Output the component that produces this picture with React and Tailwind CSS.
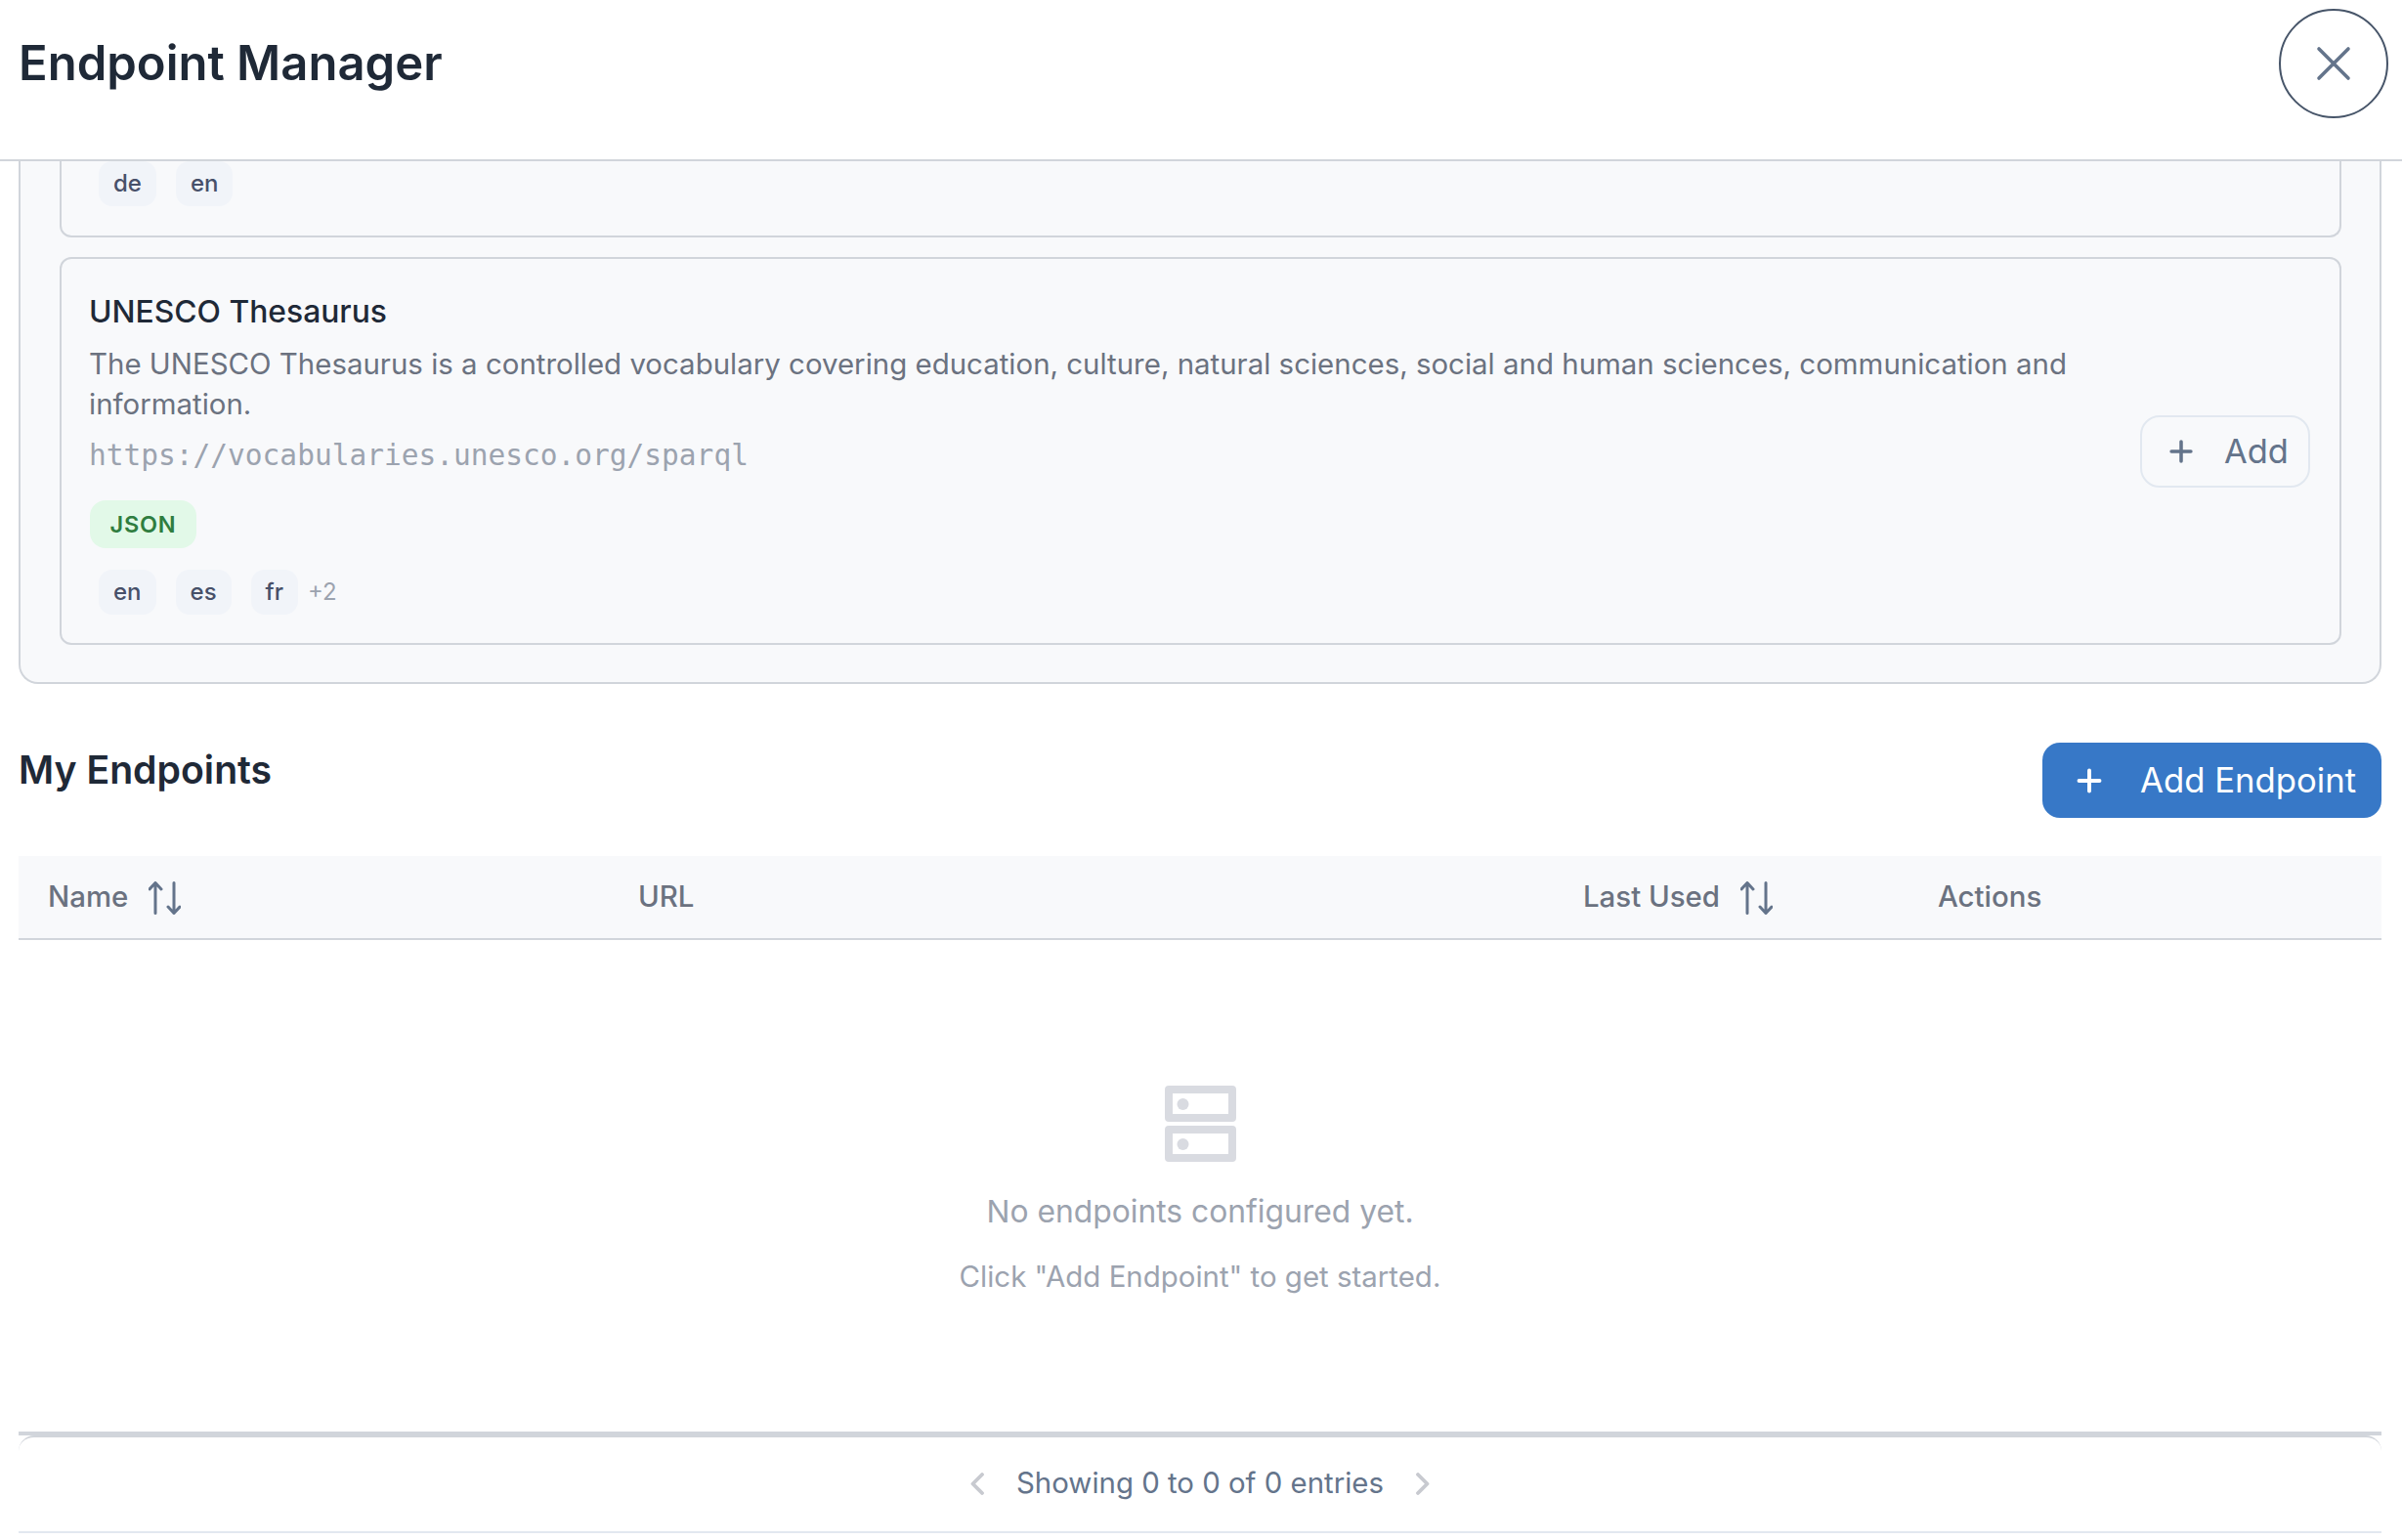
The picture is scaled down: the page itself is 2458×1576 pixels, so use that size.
import React from "react";
import { Plus } from "lucide-react";

const Chip = ({ children }) => (
  <span className="h-[46px] px-[15px] flex items-center rounded-[14px] bg-[#f1f4f9] text-[#475069] text-[24px] font-medium">
    {children}
  </span>
);

const SortIcon = () => (
  <svg width="33" height="34" viewBox="0 0 33 34" fill="none" stroke="#64748b" strokeWidth="3" strokeLinecap="round" strokeLinejoin="round" className="mt-[2px]">
    <path d="M7 1.5v31M1 8l6-6.5L13 8" />
    <path d="M26 1.5v31M20 26l6 6.5 6-6.5" />
  </svg>
);

const ServerIcon = () => (
  <svg width="73" height="78" viewBox="0 0 73 78" fill="#d9dbe1">
    <path fillRule="evenodd" d="M4 0h65a4 4 0 0 1 4 4v29a4 4 0 0 1-4 4H4a4 4 0 0 1-4-4V4a4 4 0 0 1 4-4zm4 8v21h57V8z" />
    <circle cx="18.5" cy="19" r="6" />
    <path fillRule="evenodd" d="M4 41h65a4 4 0 0 1 4 4v29a4 4 0 0 1-4 4H4a4 4 0 0 1-4-4V45a4 4 0 0 1 4-4zm4 8v21h57V49z" />
    <circle cx="18.5" cy="60" r="6" />
  </svg>
);

const Chevron = ({ flip }) => (
  <svg width="14" height="23" viewBox="0 0 14 23" fill="none" stroke="#c8cad0" strokeWidth="3.8" strokeLinecap="round" strokeLinejoin="round" className={flip ? "rotate-180" : ""}>
    <path d="M12 2L2.5 11.5 12 21" />
  </svg>
);

const HeadCell = ({ className, sort, children }) => (
  <div className={`flex items-center gap-[21px] text-[29.4px] font-medium text-[#6b7280] ${className}`}>
    {children}
    {sort && <SortIcon />}
  </div>
);

export default function App() {
  return (
    <div className="h-screen flex flex-col overflow-hidden bg-white font-['Inter',sans-serif]">
      <header className="h-[165px] shrink-0 flex items-start justify-between pl-[19px] pr-[14px] border-b-2 border-[#d1d5db]">
        <h1 className="mt-[36px] text-[49px] leading-[58px] font-semibold text-[#1f2937]">Endpoint Manager</h1>
        <button className="mt-[9px] w-[112px] h-[112px] rounded-full border-2 border-[#475569] flex items-center justify-center">
          <svg width="36" height="36" viewBox="0 0 36 36" fill="none" stroke="#64748b" strokeWidth="3.6" strokeLinecap="round">
            <path d="M3 3l30 30M33 3L3 33" />
          </svg>
        </button>
      </header>

      <main className="flex-1 flex flex-col pl-[19px] pr-[21px] overflow-hidden">
        <section className="h-[535px] shrink-0 flex flex-col gap-[20px] pl-[40px] pr-[39px] bg-[#f8f9fb] border-2 border-t-0 border-[#d1d5db] rounded-b-[20px]">
          <div className="h-[78px] shrink-0 bg-[#f8f9fb] border-2 border-t-0 border-[#d1d5db] rounded-b-[12px] pl-[38px]">
            <div className="flex gap-[20px]">
              <Chip>de</Chip>
              <Chip>en</Chip>
            </div>
          </div>

          <div className="h-[397px] shrink-0 flex items-center justify-between bg-[#f8f9fb] border-2 border-[#d1d5db] rounded-[12px] pl-[28px] pr-[30px]">
            <div className="w-[2080px] self-start pt-[32px]">
              <h3 className="text-[31.8px] leading-[44px] font-medium text-[#1f2937]">UNESCO Thesaurus</h3>
              <p className="mt-[11px] text-[29.44px] leading-[41px] text-[#6b7280]">
                The UNESCO Thesaurus is a controlled vocabulary covering education, culture, natural sciences, social and human sciences, communication and information.
              </p>
              <p className="mt-[12px] text-[29.5px] leading-[41px] text-[#9ca3af] font-['DejaVu_Sans_Mono',monospace]">
                https://vocabularies.unesco.org/sparql
              </p>
              <span className="mt-[25px] ml-[1px] w-[109px] h-[49px] flex items-center justify-center rounded-[16px] bg-[#e2f9e8] text-[#2f7d3f] text-[23.5px] font-semibold tracking-[0.8px]">
                JSON
              </span>
              <div className="mt-[22px] ml-[10px] flex items-center gap-[20px]">
                <Chip>en</Chip>
                <Chip>es</Chip>
                <div className="flex items-center gap-[10px]">
                  <Chip>fr</Chip>
                  <span className="text-[24px] text-[#9ca3af]">+2</span>
                </div>
              </div>
            </div>
            <button className="w-[174px] h-[74px] flex items-center gap-[27px] pl-[23px] rounded-[20px] border-2 border-[#e2e8f0] text-[34.4px] text-[#64748b]">
              <Plus size={34} strokeWidth={2.5} />
              Add
            </button>
          </div>
        </section>

        <div className="mt-[60px] flex items-start justify-between">
          <h2 className="mt-[6px] text-[39.2px] leading-[44px] font-semibold text-[#1f2937]">My Endpoints</h2>
          <button className="w-[347px] h-[77px] flex items-center pl-[30px] gap-[34px] rounded-[18px] bg-[#3778c7] text-white text-[34.7px]">
            <Plus size={36} strokeWidth={2.6} />
            Add Endpoint
          </button>
        </div>

        <div className="mt-[39px] h-[86px] shrink-0 flex items-center bg-[#f8f9fb] border-b-2 border-[#d1d5db]">
          <HeadCell className="w-[634px] pl-[30px]" sort>Name</HeadCell>
          <HeadCell className="w-[967px]">URL</HeadCell>
          <HeadCell className="w-[363px]" sort>Last Used</HeadCell>
          <HeadCell>Actions</HeadCell>
        </div>

        <div className="h-[507px] shrink-0 flex flex-col items-center pt-[149px] border-b-4 border-[#d1d5db]">
          <ServerIcon />
          <p className="mt-[29px] text-[31.8px] leading-[44px] text-[#9ca3af]">No endpoints configured yet.</p>
          <p className="mt-[22px] text-[29.44px] leading-[44px] text-[#9ca3af]">Click "Add Endpoint" to get started.</p>
        </div>

        <div className="h-[100px] shrink-0 flex items-center justify-center gap-[33px] pb-[2px] border-t-2 border-b-2 border-t-[#d1d5db] border-b-[#e2e8f0] rounded-t-[16px] text-[29.4px] text-[#64748b]">
          <Chevron />
          <span>Showing 0 to 0 of 0 entries</span>
          <Chevron flip />
        </div>
      </main>
    </div>
  );
}
